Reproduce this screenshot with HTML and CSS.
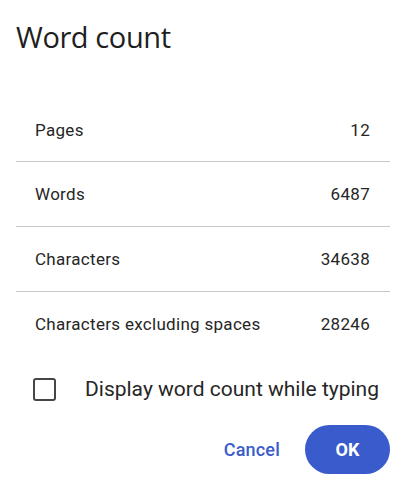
FILE: index.html
```html
<!DOCTYPE html>
<html>
<head>
<meta charset="utf-8">
<link rel="stylesheet" href="styles.css">
</head>
<body>
<div class="dialog">
  <h1 class="title">Word count</h1>
  <div class="stats">
    <div class="row"><span>Pages</span><span>12</span></div>
    <div class="row"><span>Words</span><span>6487</span></div>
    <div class="row"><span>Characters</span><span>34638</span></div>
    <div class="row"><span>Characters excluding spaces</span><span>28246</span></div>
  </div>
  <label class="check">
    <span class="box"></span>
    <span class="check-label">Display word count while typing</span>
  </label>
  <div class="actions">
    <button class="btn-text">Cancel</button>
    <button class="btn-ok">OK</button>
  </div>
</div>
</body>
</html>
```
FILE: styles.css
```css
html, body {
  margin: 0;
  padding: 0;
  background: #ffffff;
}
body {
  font-family: Roboto, "Liberation Sans", sans-serif;
  color: #1f1f1f;
}
.dialog {
  width: 404px;
  height: 488px;
  padding: 0 14px 0 16px;
  box-sizing: border-box;
}
.title {
  margin: 0;
  padding-top: 18px;
  font-family: "Open Sans", Roboto, sans-serif;
  font-weight: 400;
  font-size: 29px;
  line-height: 38px;
  color: #1f1f1f;
  letter-spacing: -0.4px;
}
.stats {
  margin-top: 42px;
}
.row {
  display: flex;
  justify-content: space-between;
  align-items: center;
  height: 64px;
  padding: 0 20px 0 19px;
  font-size: 17px;
  letter-spacing: 0.3px;
  color: #262626;
  border-bottom: 1px solid #c7c7c7;
}
.row:first-child {
  height: 63px;
}
.row:last-child {
  border-bottom: none;
}
.check {
  display: flex;
  align-items: center;
  margin-top: 21px;
  padding-left: 17px;
  height: 24px;
}
.box {
  width: 19px;
  height: 19px;
  border: 2px solid #444746;
  border-radius: 3px;
}
.check-label {
  margin-left: 29px;
  font-size: 21px;
  color: #262626;
}
.actions {
  display: flex;
  justify-content: flex-end;
  align-items: center;
  margin-top: 24px;
  gap: 25px;
}
.btn-text {
  border: none;
  background: none;
  padding: 0;
  font-family: Roboto, sans-serif;
  font-size: 18px;
  font-weight: 500;
  letter-spacing: 0.2px;
  color: #3b5bcc;
}
.btn-ok {
  border: none;
  background: #3a5bcb;
  color: #fff;
  width: 85px;
  height: 49px;
  border-radius: 25px;
  font-family: Roboto, sans-serif;
  font-size: 18px;
  font-weight: 700;
}
```
